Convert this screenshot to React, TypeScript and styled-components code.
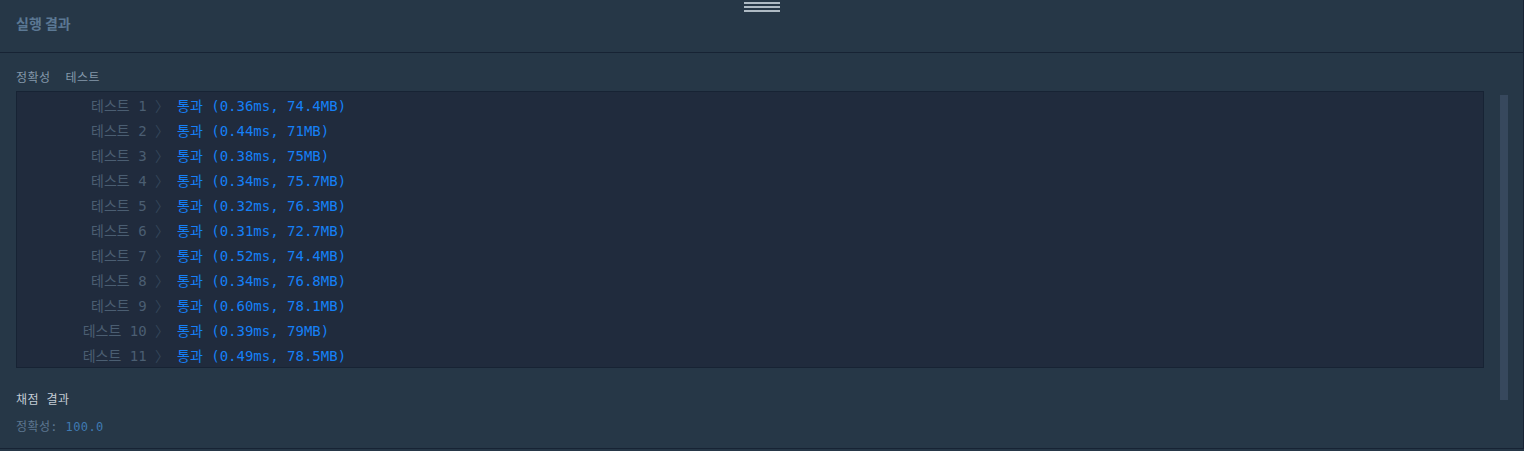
import React from 'react';
import styled, { createGlobalStyle } from 'styled-components';

const mono = `"DejaVu Sans Mono", "Noto Sans CJK KR", monospace`;

const GlobalStyle = createGlobalStyle`
  html, body {
    margin: 0;
    padding: 0;
    background: #263747;
    overflow: hidden;
  }
`;

const Panel = styled.div`
  position: relative;
  height: 448px;
  display: flex;
  flex-direction: column;
  background: #263747;
  border-right: 1px solid #172334;
  border-bottom: 1px solid #172334;
`;

const Handle = styled.div`
  position: absolute;
  top: 2px;
  left: 744px;
  width: 36px;
  display: flex;
  flex-direction: column;
  gap: 2px;
`;

const HandleLine = styled.div`
  height: 2px;
  background: #aebac4;
`;

const Header = styled.div`
  height: 53px;
  box-sizing: border-box;
  padding: 14px 16px 0;
  border-bottom: 1px solid #172334;
`;

const Title = styled.div`
  font-family: "Noto Sans CJK KR", "Noto Sans", sans-serif;
  font-size: 14px;
  font-weight: 700;
  line-height: 19px;
  color: #5b7894;
`;

const Body = styled.div`
  flex: 1;
  display: flex;
  padding-left: 16px;
`;

const Output = styled.div`
  flex: 1;
  padding-top: 16px;
  font-family: ${mono};
`;

const Line = styled.div<{ color: string; gap?: number }>`
  font-size: 12px;
  line-height: 18px;
  color: ${p => p.color};
  margin-top: ${p => p.gap ?? 0}px;
  white-space: pre;
  letter-spacing: 0.4px;
`;

const Console = styled.div`
  margin-top: 4px;
  background: #202b3d;
  border: 1px solid #172334;
  height: 275px;
`;

const Row = styled.div`
  display: grid;
  grid-template-columns: 152px 1fr;
  column-gap: 8px;
  height: 25px;
  align-items: center;
  font-size: 14px;
  white-space: pre;
`;

const Label = styled.span`
  text-align: right;
  color: #4b5e72;
`;

const Chevron = styled.span`
  color: #34465a;
`;

const Passed = styled.span`
  color: #1580f7;
`;

const Value = styled.span`
  color: #3f7ab2;
`;

const Scrollbar = styled.div`
  align-self: flex-start;
  margin: 42px 15px 0 16px;
  width: 8px;
  height: 305px;
  background: #37485d;
`;

const results: [string, string][] = [
  ['0.36ms', '74.4MB'],
  ['0.44ms', '71MB'],
  ['0.38ms', '75MB'],
  ['0.34ms', '75.7MB'],
  ['0.32ms', '76.3MB'],
  ['0.31ms', '72.7MB'],
  ['0.52ms', '74.4MB'],
  ['0.34ms', '76.8MB'],
  ['0.60ms', '78.1MB'],
  ['0.39ms', '79MB'],
  ['0.49ms', '78.5MB'],
];

export default function App() {
  return (
    <>
      <GlobalStyle />
      <Panel>
        <Handle>
          <HandleLine />
          <HandleLine />
          <HandleLine />
        </Handle>
        <Header>
          <Title>실행 결과</Title>
        </Header>
        <Body>
          <Output>
            <Line color="#8497aa">정확성  테스트</Line>
            <Console>
              {results.map(([time, mem], i) => (
                <Row key={i}>
                  <Label>
                    테스트 {i + 1} <Chevron>〉</Chevron>
                  </Label>
                  <Passed>통과 ({time}, {mem})</Passed>
                </Row>
              ))}
            </Console>
            <Line color="#c3ccd5" gap={23}>채점 결과</Line>
            <Line color="#5d7690" gap={9}>
              정확성: <Value>100.0</Value>
            </Line>
          </Output>
          <Scrollbar />
        </Body>
      </Panel>
    </>
  );
}
